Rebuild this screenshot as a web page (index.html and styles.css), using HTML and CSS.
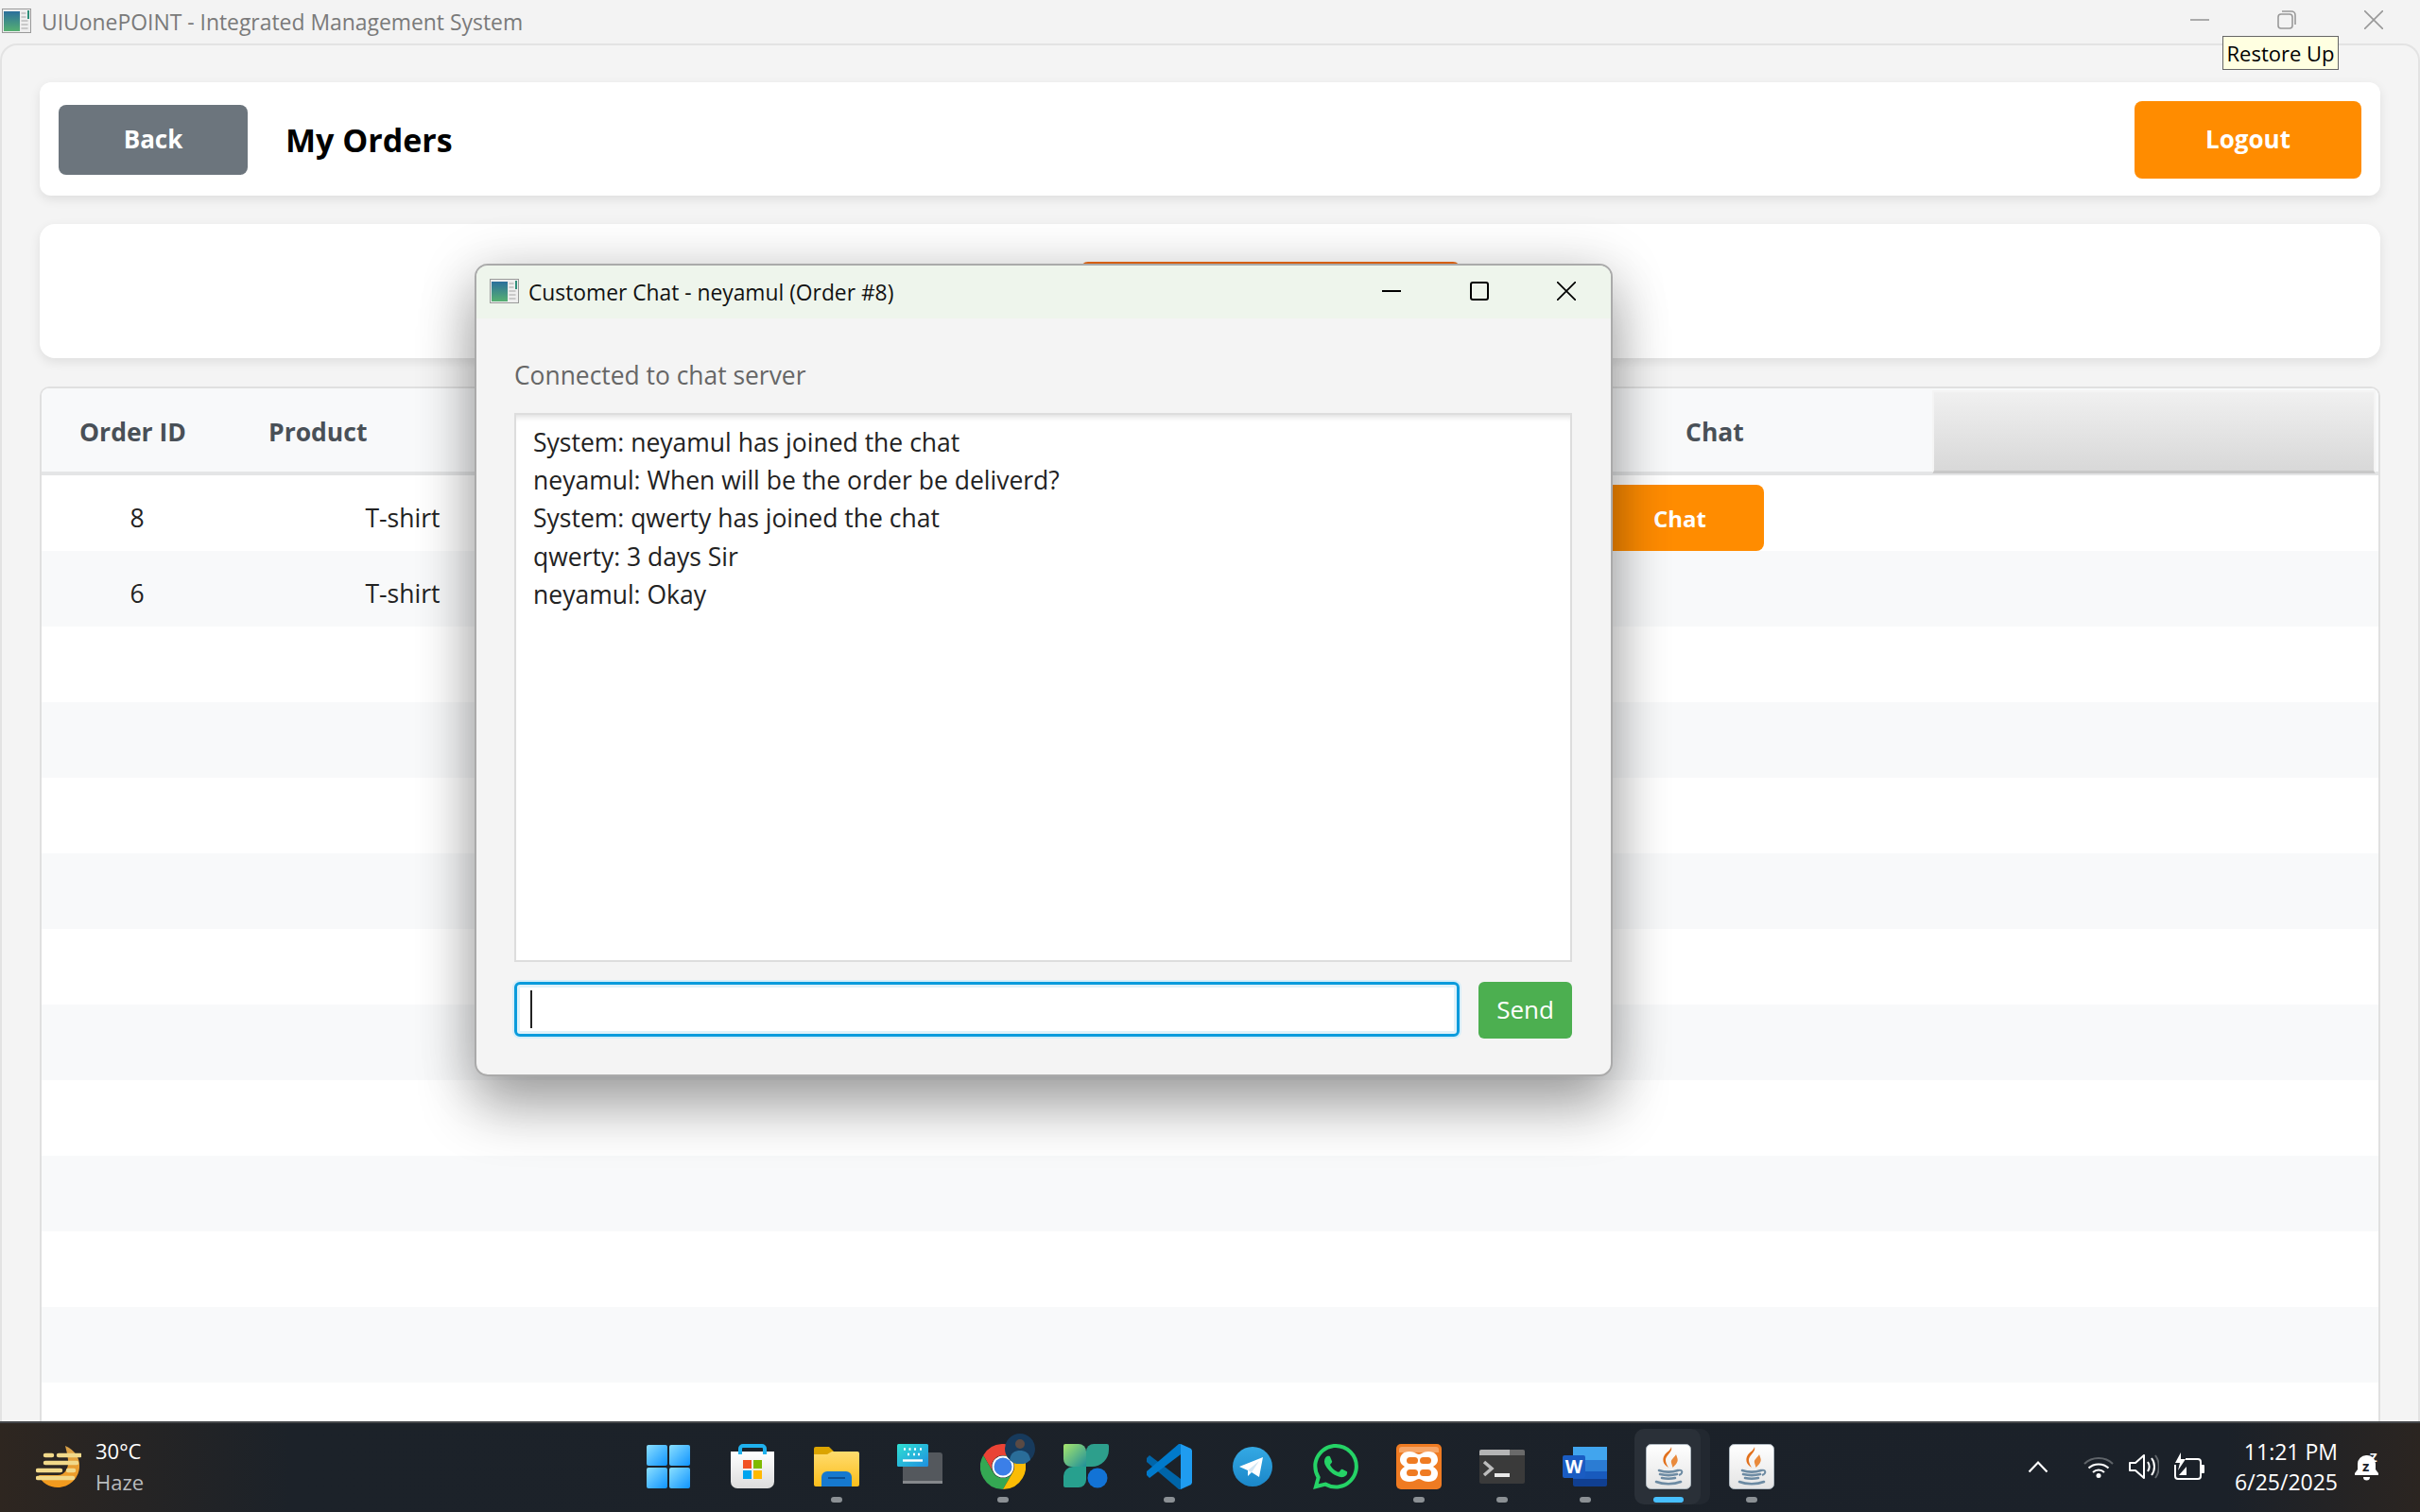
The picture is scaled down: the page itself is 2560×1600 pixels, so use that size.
FILE: index.html
```html
<!DOCTYPE html>
<html lang="en">
<head>
<meta charset="utf-8">
<title>UIUonePOINT - Integrated Management System</title>
<link rel="stylesheet" href="styles.css">
</head>
<body>
<svg class="defs" width="0" height="0" aria-hidden="true">
  <defs>
    <linearGradient id="appg" x1="0" y1="0" x2="0" y2="1"><stop offset="0" stop-color="#2b6f9c"/><stop offset="1" stop-color="#56b071"/></linearGradient>
    <linearGradient id="wing" x1="0" y1="0" x2="1" y2="1"><stop offset="0" stop-color="#8adfff"/><stop offset="1" stop-color="#0f94ff"/></linearGradient>
    <linearGradient id="bagg" x1="0" y1="0" x2="0" y2="1"><stop offset="0" stop-color="#ffffff"/><stop offset="1" stop-color="#dcdcdc"/></linearGradient>
    <linearGradient id="foldg" x1="0" y1="0" x2="0" y2="1"><stop offset="0" stop-color="#ffdc6e"/><stop offset="1" stop-color="#fbbe1c"/></linearGradient>
    <linearGradient id="kbg" x1="0" y1="0" x2="1" y2="1"><stop offset="0" stop-color="#2fe0d2"/><stop offset="1" stop-color="#1e8fe0"/></linearGradient>
    <linearGradient id="leaf" x1="0" y1="0" x2="1" y2="1"><stop offset="0" stop-color="#a8e66c"/><stop offset="1" stop-color="#1f8f9a"/></linearGradient>
    <linearGradient id="tgg" x1="0" y1="0" x2="0" y2="1"><stop offset="0" stop-color="#34a9e4"/><stop offset="1" stop-color="#1b87c9"/></linearGradient>
    <linearGradient id="javag" x1="0" y1="0" x2="0" y2="1"><stop offset="0" stop-color="#ffffff"/><stop offset="1" stop-color="#e4e4e4"/></linearGradient>
    <linearGradient id="sung" x1="0" y1="0" x2="0" y2="1"><stop offset="0" stop-color="#d9a24a"/><stop offset="1" stop-color="#f59a1a"/></linearGradient>
    <symbol id="appicon" viewBox="0 0 31 26">
      <rect x=".5" y=".5" width="30" height="25" fill="#eeeeee" stroke="#9a9a9a"/>
      <rect x="2" y="3" width="17" height="21" fill="url(#appg)"/>
      <rect x="27" y="2" width="2" height="9" fill="#2f8f7a"/>
      <path d="M20.500 5h5M20.500 9h5M20.500 13h7M20.500 17h7M20.500 21h7" stroke="#bdbdbd" stroke-width="1.500"/>
    </symbol>
    <symbol id="java" viewBox="0 0 48 48">
      <rect x=".5" y=".5" width="47" height="47" rx="5" fill="url(#javag)" stroke="#aeb8c0"/>
      <path d="M27 3c2 6-7 9-6 15 .4 2.500 1.500 4.500 3 7-6-3.500-7-9-4-13.500 2-3 6-4.500 7-8.500z" fill="#e2711d"/>
      <path d="M32 11c-1 3-6 5-5 9 .4 1.500 1 3 1.500 5 3.500-3.500 6-6 5-9.500-.3-1.500-1-3-1.500-4.500z" fill="#e98a3c"/>
      <path d="M14 28c6 2 14 2 20 0M15 32c6 1.500 12 1.500 18 0M17 36c5 1 9 1 14 0M11 40c7 3 19 3 26 0" fill="none" stroke="#6d8ba3" stroke-width="2.600" stroke-linecap="round"/>
      <path d="M34 28c5-1.500 6 3 1 5" fill="none" stroke="#6d8ba3" stroke-width="2"/>
    </symbol>
  </defs>
</svg>

<div class="screen">
  <header class="titlebar">
    <svg class="appicon"><use href="#appicon"/></svg>
    <span class="apptitle">UIUonePOINT - Integrated Management System</span>
    <div class="winctrls">
      <svg class="ctrl" viewBox="0 0 20 20"><path d="M0 10h20" stroke="#999" stroke-width="1.600"/></svg>
      <svg class="ctrl" viewBox="0 0 20 20"><rect x="1" y="4" width="15" height="15" rx="3" fill="none" stroke="#999" stroke-width="1.600"/><path d="M5 1h10a4 4 0 0 1 4 4v10" fill="none" stroke="#999" stroke-width="1.600"/></svg>
      <svg class="ctrl" viewBox="0 0 20 20"><path d="M0 0l20 20M20 0L0 20" stroke="#999" stroke-width="1.600"/></svg>
    </div>
  </header>

  <main class="app">
    <section class="topcard">
      <button class="btn btn-back">Back</button>
      <h1 class="pagetitle">My Orders</h1>
      <button class="btn btn-logout">Logout</button>
    </section>

    <section class="filtercard">
      <button class="btn btn-filter" aria-label="Filter"></button>
    </section>

    <section class="tablecard">
      <div class="row headrow">
        <div class="hcell">Order ID</div>
        <div class="hcell">Product</div>
        <div class="hcell"></div>
        <div class="hcell hchat">Chat</div>
        <div class="filler"></div>
      </div>
      <div class="row">
        <div class="cell">8</div>
        <div class="cell">T-shirt</div>
        <div class="cell"></div>
        <div class="cellchat"><button class="btn btn-chat">Chat</button></div>
      </div>
      <div class="row stripe">
        <div class="cell">6</div>
        <div class="cell">T-shirt</div>
      </div>
      <div class="row"></div><div class="row stripe"></div>
      <div class="row"></div><div class="row stripe"></div>
      <div class="row"></div><div class="row stripe"></div>
      <div class="row"></div><div class="row stripe"></div>
      <div class="row"></div><div class="row stripe"></div>
      <div class="row"></div>
    </section>
  </main>

  <footer class="taskbar">
    <div class="weather">
      <svg class="weathericon" viewBox="0 0 48 44">
        <path d="M31 0c10 4 16 13 15 23-1 12-11 21-23 21C14 44 6 39 3 31h20c8 0 12-8 11-16-.5-6-2-11-3-15z" fill="url(#sung)"/>
        <path d="M10 10h7M24 10h23M10 18h33M2 26h24M34 26h6M2 34h37" stroke="#f1d98a" stroke-width="4.500" stroke-linecap="round"/>
      </svg>
      <div class="weathertext">
        <div class="temp">30°C</div>
        <div class="cond">Haze</div>
      </div>
    </div>

    <div class="apps">
      <div class="tb"><svg class="ic" viewBox="0 0 48 48"><rect x="1" y="1" width="22" height="22" rx="2" fill="url(#wing)"/><rect x="25" y="1" width="22" height="22" rx="2" fill="url(#wing)"/><rect x="1" y="25" width="22" height="22" rx="2" fill="url(#wing)"/><rect x="25" y="25" width="22" height="22" rx="2" fill="url(#wing)"/></svg></div>
      <div class="tb tb-store"><svg class="ic" viewBox="0 0 48 48"><path d="M1 8h46v32a7 7 0 0 1-7 7H8a7 7 0 0 1-7-7z" fill="url(#bagg)"/><path d="M11 11V5a3 3 0 0 1 3-3h20a3 3 0 0 1 3 3v6" fill="none" stroke="#1fb1ee" stroke-width="4"/><rect x="14" y="17" width="9" height="9" fill="#f25022"/><rect x="25" y="17" width="9" height="9" fill="#7fba00"/><rect x="14" y="28" width="9" height="9" fill="#00a4ef"/><rect x="25" y="28" width="9" height="9" fill="#ffb900"/></svg></div>
      <div class="tb on"><svg class="ic" viewBox="0 0 48 48"><path d="M0 5a2 2 0 0 1 2-2h14l5 5v6H0z" fill="#dba400"/><path d="M0 11h14l5-3h27a2 2 0 0 1 2 2v33a2 2 0 0 1-2 2H2a2 2 0 0 1-2-2z" fill="url(#foldg)"/><path d="M8 45V35a6 6 0 0 1 6-6h20a6 6 0 0 1 6 6v10z" fill="#1679cf"/><path d="M15 36h18" stroke="#0c4f92" stroke-width="2"/></svg></div>
      <div class="tb"><svg class="ic" viewBox="0 0 48 48"><rect x="6" y="9" width="42" height="33" rx="3" fill="#54585d"/><rect x="6" y="39" width="42" height="3" fill="#85888c"/><rect x="0" y="0" width="33" height="24" rx="1.500" fill="url(#kbg)"/><path d="M7 5.500h2M12.500 5.500h2M18 5.500h2M24 5.500h2M11 11h2M17 11h2M22 11h2" stroke="#fff" stroke-width="2.400"/><path d="M6 17.500h21" stroke="#fff" stroke-width="2.400"/></svg></div>
      <div class="tb on tb-chrome"><svg class="ic ic-chrome" viewBox="0 0 48 48"><path d="M24 12h20.800A24 24 0 0 0 3.200 12l10.400 18A12 12 0 0 1 24 12z" fill="#ea4335"/><path d="M13.600 30L3.200 12A24 24 0 0 0 24 48l10.400-18a12 12 0 0 1-20.800 0z" fill="#34a853"/><path d="M24 12h20.800A24 24 0 0 1 24 48l10.400-18A12 12 0 0 0 24 12z" fill="#fbbc04"/><circle cx="24" cy="24" r="11.500" fill="#fff"/><circle cx="24" cy="24" r="9.500" fill="#3b7fe8"/></svg>
        <svg class="avatar" viewBox="0 0 32 32"><circle cx="16" cy="16" r="16" fill="#173a5c"/><circle cx="16" cy="11" r="5" fill="#5a4a44"/><path d="M5 28c1-8 6-10 11-10s10 2 11 10a16 16 0 0 1-22 0z" fill="#2a6d99"/></svg></div>
      <div class="tb"><svg class="ic" viewBox="0 0 48 48"><path d="M2 0h14a8 8 0 0 1 8 8v16H8a8 8 0 0 1-8-8V2a2 2 0 0 1 2-2z" fill="url(#leaf)"/><path d="M46 0H32a8 8 0 0 0-8 8v16h6a18 18 0 0 0 18-18V2a2 2 0 0 0-2-2z" fill="#2d9f8c"/><path d="M2 46h14a8 8 0 0 0 8-8V24H10A10 10 0 0 0 0 34v10a2 2 0 0 0 2 2z" fill="#27a08e"/><circle cx="36" cy="36" r="10.500" fill="#1273d6"/></svg></div>
      <div class="tb on"><svg class="ic" viewBox="0 0 48 48"><polygon points="3,12 0,15 0,19 34,48 36,48 36,37" fill="#0065a9"/><polygon points="36,0 34,0 0,29 0,33 3,36 36,11" fill="#007acc"/><polygon points="36,0 47,5 48,7 48,41 47,43 36,48" fill="#1f9cf0"/></svg></div>
      <div class="tb"><svg class="ic" viewBox="0 0 48 48"><circle cx="24" cy="24" r="21" fill="url(#tgg)"/><path d="M10 24l25-10-4 21-8-5-4 4v-6z" fill="#fff"/><path d="M19 28l12-10-8 12z" fill="#d3e7f4"/></svg></div>
      <div class="tb"><svg class="ic" viewBox="0 0 24 24"><path fill="#25d366" d="M17.472 14.382c-.297-.149-1.758-.867-2.030-.967-.273-.099-.471-.148-.670.150-.197.297-.767.966-.940 1.164-.173.199-.347.223-.644.075-.297-.150-1.255-.463-2.390-1.475-.883-.788-1.480-1.761-1.653-2.059-.173-.297-.018-.458.130-.606.134-.133.298-.347.446-.520.149-.174.198-.298.298-.497.099-.198.050-.371-.025-.520-.075-.149-.669-1.612-.916-2.207-.242-.579-.487-.500-.669-.510-.173-.008-.371-.010-.570-.010-.198 0-.520.074-.792.372-.272.297-1.040 1.016-1.040 2.479 0 1.462 1.065 2.875 1.213 3.074.149.198 2.096 3.200 5.077 4.487.709.306 1.262.489 1.694.625.712.227 1.360.195 1.871.118.571-.085 1.758-.719 2.006-1.413.248-.694.248-1.289.173-1.413-.074-.124-.272-.198-.570-.347m-5.421 7.403h-.004a9.870 9.870 0 0 1-5.031-1.378l-.361-.214-3.741.982.998-3.648-.235-.374a9.860 9.860 0 0 1-1.510-5.260c.001-5.450 4.436-9.884 9.888-9.884 2.640 0 5.122 1.030 6.988 2.898a9.825 9.825 0 0 1 2.893 6.994c-.003 5.450-4.437 9.884-9.885 9.884m8.413-18.297A11.815 11.815 0 0 0 12.050 0C5.495 0 .160 5.335.157 11.892c0 2.096.547 4.142 1.588 5.945L.057 24l6.305-1.654a11.882 11.882 0 0 0 5.683 1.448h.005c6.554 0 11.890-5.335 11.893-11.893a11.821 11.821 0 0 0-3.480-8.413z"/></svg></div>
      <div class="tb on"><svg class="ic" viewBox="0 0 48 48"><rect x="0" y="0" width="48" height="48" rx="5" fill="#ef7b22"/><path d="M3 6q0-3 3-3h36q3 0 3 3v3H3z" fill="#f6a566"/><path d="M14 8c6 0 7 3 10 3s4-3 10-3c7 0 10 4 10 9 0 3-2 5-5 7 3 2 5 4 5 7 0 5-3 9-10 9-6 0-7-3-10-3s-4 3-10 3c-7 0-10-4-10-9 0-3 2-5 5-7-3-2-5-4-5-7 0-5 3-9 10-9z" fill="#fff"/><rect x="11" y="14" width="12" height="7" rx="3.500" fill="#ef7b22"/><rect x="25" y="14" width="12" height="7" rx="3.500" fill="#ef7b22"/><rect x="11" y="27" width="12" height="7" rx="3.500" fill="#ef7b22"/><rect x="25" y="27" width="12" height="7" rx="3.500" fill="#ef7b22"/></svg></div>
      <div class="tb on"><svg class="ic" viewBox="0 0 48 48"><rect x="0" y="6" width="48" height="36" rx="2" fill="#3a3a3a"/><path d="M0 8a2 2 0 0 1 2-2h30v6H0z" fill="#b5b5b5"/><path d="M32 6h14a2 2 0 0 1 2 2v4H32z" fill="#6a6a6a"/><path d="M5 19l8 7-8 7" fill="none" stroke="#bdbdbd" stroke-width="3.500"/><rect x="16" y="31" width="16" height="4" fill="#e8e8e8"/></svg></div>
      <div class="tb on"><svg class="ic" viewBox="0 0 48 48"><rect x="11" y="3" width="36" height="14" fill="#41a5ee"/><rect x="11" y="17" width="36" height="12" fill="#2b7cd3"/><rect x="11" y="29" width="36" height="8" fill="#185abd"/><path d="M11 37h36v6a2 2 0 0 1-2 2H13a2 2 0 0 1-2-2z" fill="#103f91"/><rect x="0" y="12" width="24" height="24" rx="2" fill="#1a5cc2"/><text class="wordw" x="12" y="31" text-anchor="middle">W</text></svg></div>
      <div class="tb active"><div class="stack2"></div><div class="stack"></div><svg class="ic ic-top"><use href="#java"/></svg></div>
      <div class="tb on"><svg class="ic"><use href="#java"/></svg></div>
    </div>

    <div class="tray">
      <svg class="chev" viewBox="0 0 22 14"><path d="M1.500 12.500L11 2.500l9.500 10" fill="none" stroke="#fff" stroke-width="2.200"/></svg>
      <svg class="sys" viewBox="0 0 32 24"><path d="M1 9C9 1 23 1 31 9" fill="none" stroke="#5f6469" stroke-width="2"/><path d="M5.500 13.500C11 8 21 8 26.500 13.500M10 18c3.500-3.500 8.500-3.500 12 0" fill="none" stroke="#fff" stroke-width="2"/><circle cx="16" cy="21.500" r="2.500" fill="#fff"/></svg>
      <svg class="sys" viewBox="0 0 32 28"><path d="M1 10h6l9-8v24l-9-8H1z" fill="none" stroke="#fff" stroke-width="2" stroke-linejoin="round"/><path d="M20 9c2 3 2 7 0 10M24 5c4 5 4 13 0 18" fill="none" stroke="#fff" stroke-width="2"/><path d="M28 2c5 7 5 17 0 24" fill="none" stroke="#5f6469" stroke-width="2"/></svg>
      <svg class="sys sys-batt" viewBox="0 0 32 30"><path d="M12 7h13a3 3 0 0 1 3 3v15a3 3 0 0 1-3 3H4a3 3 0 0 1-3-3V13" fill="none" stroke="#fff" stroke-width="2"/><rect x="28" y="13" width="4" height="9" rx="1" fill="#fff"/><path d="M5 24l8-9v9z" fill="#fff"/><path d="M7 0L1 11h5l-2 8 8-12H7z" fill="#fff"/></svg>
      <div class="clock">
        <div>11:21 PM</div>
        <div>6/25/2025</div>
      </div>
      <svg class="bell" viewBox="0 0 27 30"><path d="M12 3a9 9 0 0 0-9 9v6l-3 4v2h25v-2l-3-4v-6a9 9 0 0 0-10-9z" fill="#fff"/><path d="M9 26h7a3.500 3.500 0 0 1-7 0z" fill="#fff"/><text class="zz zz1" x="8" y="20">z</text><text class="zz zz2" x="16" y="10">Z</text></svg>
    </div>
  </footer>

  <div class="tooltip">Restore Up</div>

  <div class="dialog">
    <div class="dlgtitle">
      <svg class="dlgicon"><use href="#appicon"/></svg>
      <span class="dlgname">Customer Chat - neyamul (Order #8)</span>
      <div class="dlgctrls">
        <svg class="ctrl" viewBox="0 0 20 20"><path d="M0 10h20" stroke="#000" stroke-width="2"/></svg>
        <svg class="ctrl" viewBox="0 0 20 20"><rect x="1" y="1" width="18" height="18" rx="2" fill="none" stroke="#000" stroke-width="2"/></svg>
        <svg class="ctrl" viewBox="0 0 20 20"><path d="M0 0l20 20M20 0L0 20" stroke="#000" stroke-width="1.700"/></svg>
      </div>
    </div>
    <div class="dlgbody">
      <div class="status">Connected to chat server</div>
      <div class="log">
        <div>System: neyamul has joined the chat</div>
        <div>neyamul: When will be the order be deliverd?</div>
        <div>System: qwerty has joined the chat</div>
        <div>qwerty: 3 days Sir</div>
        <div>neyamul: Okay</div>
      </div>
      <div class="inputrow">
        <div class="chatinput"><span class="caret"></span></div>
        <button class="btn btn-send">Send</button>
      </div>
    </div>
  </div>
</div>
</body>
</html>
```

FILE: styles.css
```css
* { box-sizing: border-box; }
html, body { margin: 0; padding: 0; height: 100%; }
body {
  font-family: "Open Sans", "Noto Sans", "Liberation Sans", sans-serif;
  overflow: hidden;
  background: #f3f3f3;
}
.defs { position: absolute; }
.screen {
  position: relative;
  width: 2560px;
  height: 1600px;
  display: flex;
  flex-direction: column;
  overflow: hidden;
  background: #f3f3f3;
}

/* title bar */
.titlebar {
  height: 46px;
  flex: none;
  display: flex;
  align-items: flex-start;
  padding: 9px 39px 0 2px;
}
.appicon { width: 31px; height: 26px; flex: none; }
.apptitle { margin-left: 11px; font-size: 22.900px; line-height: 30px; color: #7a7a7a; white-space: nowrap; }
.winctrls { margin-left: auto; display: flex; gap: 72px; padding-top: 2px; }
.ctrl { width: 20px; height: 20px; flex: none; }

/* app area */
.app {
  flex: 1;
  min-height: 0;
  display: flex;
  flex-direction: column;
  gap: 30px;
  padding: 39px 40px 0;
  background: #f4f4f4;
  border: 2px solid #e3e3e3;
  border-bottom: 0;
  border-radius: 18px 18px 0 0;
  overflow: hidden;
}
.btn {
  border: 0;
  border-radius: 8px;
  font-family: inherit;
  font-weight: 700;
  color: #fff;
  padding: 0;
}
.topcard {
  flex: none;
  height: 120px;
  display: flex;
  align-items: center;
  padding: 2px 20px 0;
  background: #fff;
  border-radius: 12px;
  box-shadow: 0 4px 12px rgba(0, 0, 0, .09);
}
.btn-back { width: 200px; height: 74px; padding-bottom: 2px; background: #6c757d; font-size: 26px; }
.pagetitle { margin: 0 0 0 40px; font-size: 34px; font-weight: 700; color: #000; }
.btn-logout { margin-left: auto; width: 240px; height: 82px; padding-bottom: 2px; background: #ff8c00; font-size: 26px; }

.filtercard {
  flex: none;
  height: 142px;
  padding: 40px 0 0 1101px;
  background: #fff;
  border-radius: 16px;
  box-shadow: 0 4px 12px rgba(0, 0, 0, .09);
}
.btn-filter { display: block; width: 402px; height: 68px; background: #ee6a12; }

.tablecard {
  flex: 1;
  min-height: 0;
  background: #fff;
  border: 2px solid #e0e0e0;
  border-bottom: 0;
  border-radius: 10px 10px 0 0;
  overflow: hidden;
}
.row {
  height: 80px;
  display: grid;
  grid-template-columns: 202px 360px 1082px 358px 467px;
  align-items: center;
  font-size: 26.500px;
  color: #222;
}
.stripe { background: #f8f9fa; }
.headrow {
  height: 92px;
  align-items: stretch;
  background: #f8f9fa;
  border-bottom: 4px solid #e4e5e6;
}
.hcell {
  display: flex;
  align-items: center;
  padding: 3px 0 0 40px;
  font-weight: 700;
  color: #495057;
  font-size: 26.500px;
}
.hcell:nth-child(2) { margin-left: -2px; }
.hchat { padding-left: 95px; }
.filler {
  margin: 2px 0 -2px -2px;
  border: 2px solid #f4f4f4;
  border-bottom: 3px solid #c8c8c8;
  background: linear-gradient(#f0f0f0, #d8d8d8);
}
.cell { text-align: center; padding-top: 10px; }
.btn-chat { display: block; width: 178px; height: 70px; background: #ff8c00; font-size: 24px; margin-top: 10px; }

/* dialog */
.dialog {
  position: absolute;
  left: 502px;
  top: 279px;
  width: 1204px;
  height: 860px;
  display: flex;
  flex-direction: column;
  background: #f4f4f4;
  border: 2px solid #aaaaaa;
  border-radius: 14px;
  box-shadow: 0 34px 60px rgba(0, 0, 0, .3), 0 6px 60px rgba(0, 0, 0, .18);
}
.dlgtitle {
  flex: none;
  height: 56px;
  display: flex;
  align-items: flex-start;
  padding: 14px 37px 0 14px;
  background: #eef5ec;
  border-radius: 12px 12px 0 0;
}
.dlgicon { width: 31px; height: 26px; flex: none; }
.dlgname { margin-left: 10px; font-size: 22.800px; line-height: 30px; color: #111; white-space: nowrap; }
.dlgctrls { margin-left: auto; display: flex; gap: 72.500px; padding-top: 3px; }
.dlgbody { flex: 1; min-height: 0; padding: 40px 41px 0 40px; display: flex; flex-direction: column; }
.status { height: 40px; line-height: 40px; font-size: 26.400px; color: #666; white-space: nowrap; }
.log {
  margin-top: 20px;
  height: 581px;
  padding: 9px 18px;
  background: #fff;
  border: 2px solid #dddddd;
  box-shadow: inset 0 7px 6px -5px #dcdcdc;
  font-size: 26.500px;
  line-height: 40.200px;
  color: #222;
}
.inputrow { margin-top: 21px; display: flex; gap: 20px; align-items: flex-start; }
.chatinput {
  width: 1000px;
  height: 58px;
  padding: 6px 0 0 14px;
  background: #fff;
  border: 3px solid #0a9bdc;
  border-radius: 6px;
  box-shadow: 0 0 0 2px #d6eef9, inset 0 0 0 3px #e0f2fa;
}
.caret { display: block; width: 2px; height: 40px; background: #222; }
.btn-send { width: 99px; height: 60px; padding-bottom: 3px; background: #4caf50; border-radius: 6px; font-size: 26px; font-weight: 400; }

/* tooltip */
.tooltip {
  position: absolute;
  left: 2351px;
  top: 38px;
  width: 123px;
  height: 36px;
  border: 1.500px solid #666;
  background: #ffffe1;
  color: #000;
  font-size: 22px;
  line-height: 35px;
  text-align: center;
  white-space: nowrap;
}

/* taskbar */
.taskbar {
  flex: none;
  height: 96px;
  display: grid;
  grid-template-columns: 663px auto 1fr;
  align-items: center;
  background: linear-gradient(90deg, #2e2620 0, #1c2229 12%, #1b2129 92%, #2b2521 100%);
  box-shadow: inset 0 2px 0 #45474a;
  color: #fff;
}
.weather { display: flex; align-items: center; padding-left: 38px; }
.weathericon { width: 48px; height: 44px; flex: none; }
.weathertext { margin-left: 15px; font-size: 22px; line-height: 33px; }
.temp { color: #fff; }
.cond { color: #b9bcbf; }
.apps { display: flex; }
.tb {
  position: relative;
  width: 88px;
  height: 96px;
  display: flex;
  align-items: center;
  justify-content: center;
}
.tb-store { width: 90px; }
.ic { width: 48px; height: 48px; flex: none; }
.ic-top { position: relative; z-index: 2; }
.tb.on::after {
  content: "";
  position: absolute;
  left: 38px;
  bottom: 10px;
  width: 12px;
  height: 6px;
  border-radius: 3px;
  background: #8b9094;
}
.tb.active::after {
  content: "";
  position: absolute;
  left: 28px;
  bottom: 10px;
  width: 32px;
  height: 6px;
  border-radius: 3px;
  background: #47bfff;
  z-index: 2;
}
.stack {
  position: absolute;
  left: 8px;
  top: 8px;
  width: 70px;
  height: 80px;
  border-radius: 10px;
  background: #2a3038;
}
.stack2 {
  position: absolute;
  left: 16px;
  top: 8px;
  width: 72px;
  height: 80px;
  border-radius: 10px;
  background: #222830;
}
.avatar { position: absolute; left: 46px; top: 13px; width: 32px; height: 32px; }
.wordw { font-family: "Open Sans", sans-serif; font-weight: 700; font-size: 19px; fill: #fff; }

.tray { display: flex; align-items: center; justify-content: flex-end; gap: 16px; padding-right: 42px; }
.chev { width: 22px; height: 14px; margin-right: 21px; }
.sys { width: 32px; height: 28px; flex: none; }
.sys-batt { height: 30px; margin-right: 16px; }
.clock { font-size: 23px; line-height: 32px; text-align: right; color: #fff; white-space: nowrap; margin-right: 2px; }
.bell { width: 27px; height: 30px; flex: none; overflow: visible; }
.zz { font-family: "Open Sans", sans-serif; font-weight: 700; }
.zz1 { font-size: 15px; fill: #1b2129; }
.zz2 { font-size: 13px; fill: #fff; }
```
